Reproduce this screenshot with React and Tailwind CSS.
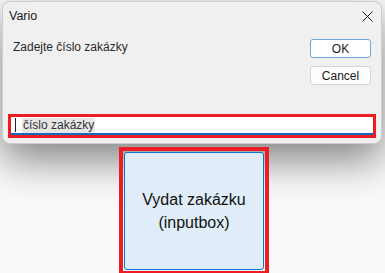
import React from 'react';

const font = { fontFamily: '"Liberation Sans", Arial, sans-serif' };

const CloseIcon = () => (
  <svg width="11" height="11" viewBox="0 0 11 11" className="text-[#1a1a1a]">
    <path d="M0.5 0.5 L10.5 10.5 M10.5 0.5 L0.5 10.5" stroke="currentColor" strokeWidth="1" fill="none" />
  </svg>
);

export default function App() {
  return (
    <div className="w-[385px] h-[273px] overflow-hidden bg-[#f9f9f9] pt-[1px]" style={font}>
      {/* Dialog */}
      <div className="ml-[2px] w-[380px] h-[143px] flex flex-col rounded-[8px] border border-[#cdcdcd] bg-[#f0f0f0] shadow-[0_16px_40px_rgba(0,0,0,0.48)]">
        <div className="h-[29px] flex items-center justify-between pl-[6px] pr-[8px]">
          <span className="text-[12.5px] text-[#1a1a1a]">Vario</span>
          <CloseIcon />
        </div>
        <div className="flex justify-between pl-[10px] pr-[10px] pt-[8px]">
          <span className="text-[12px] text-[#2b2b2b] leading-[16px]">Zadejte číslo zakázky</span>
          <div className="flex flex-col gap-[8px]">
            <button className="w-[61px] h-[19px] rounded-[3px] border border-[#6ea6de] bg-white text-[12px] text-[#1a1a1a] leading-none">
              OK
            </button>
            <button className="w-[61px] h-[19px] rounded-[3px] border border-[#d4d4d4] bg-[#fdfdfd] text-[12px] text-[#1a1a1a] leading-none">
              Cancel
            </button>
          </div>
        </div>
        <div className="flex-1" />
        {/* Input with red highlight */}
        <div className="mx-[5px] mb-[5px] h-[24px] border-[3px] border-[#ee1c25]">
          <div className="h-full bg-white border-b-2 border-[#0f6cbd] flex items-center pl-[4px]">
            <span className="w-[1px] h-[14px] bg-[#222]" />
            <span className="ml-[6px] bg-[#e6e6e6] px-[1px] text-[12px] leading-[15px] text-[#333]">číslo zakázky</span>
          </div>
        </div>
      </div>

      {/* Highlighted action button */}
      <div className="pl-[119px] pt-[3px]">
        <div className="w-[150px] h-[128px] border-[4px] border-[#ee1c25] p-[1px]">
          <button className="w-[140px] h-[118px] rounded-[3px] border-[1.5px] border-[#0078d4] bg-[#e0edf8] text-[16px] leading-[23px] text-[#111] flex flex-col items-center justify-center">
            <span>Vydat zakázku</span>
            <span>(inputbox)</span>
          </button>
        </div>
      </div>
    </div>
  );
}
